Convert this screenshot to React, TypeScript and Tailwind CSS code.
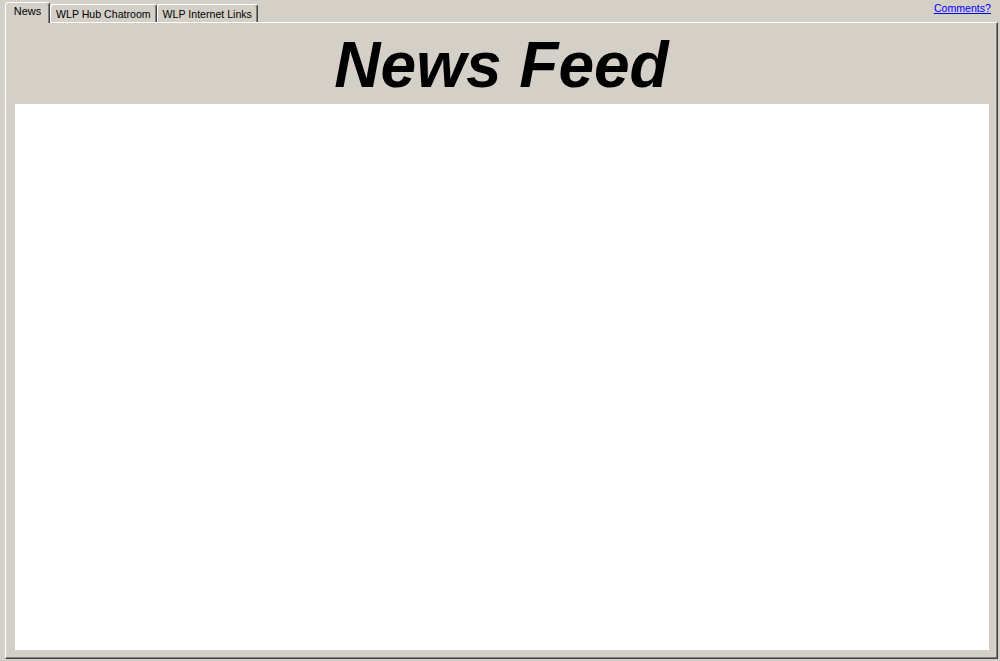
export default function App() {
  const tabs = ['News', 'WLP Hub Chatroom', 'WLP Internet Links'];
  const active = 0;

  return (
    <div className="w-[1000px] h-[661px] bg-[#d4d0c8] font-['Liberation_Sans',Arial,sans-serif] text-black overflow-hidden">
      {/* tab strip */}
      <div className="h-[22px] flex items-end justify-between pl-[5px] pr-[9px]">
        <div className="flex items-end">
          {tabs.map((t, i) =>
            i === active ? (
              <div
                key={t}
                className="relative z-10 -mb-px h-[21px] w-[45px] bg-[#d4d0c8] border-l border-t border-white border-r border-r-[#404040] shadow-[inset_-1px_0_0_#808080] rounded-tl-[3px] rounded-tr-[3px] flex justify-center pt-[2px] text-[11px] leading-[13px]"
              >
                {t}
              </div>
            ) : (
              <div
                key={t}
                className="h-[18px] px-[5px] bg-[#d4d0c8] border-l border-t border-white border-r border-r-[#404040] shadow-[inset_-1px_0_0_#808080] rounded-tl-[3px] rounded-tr-[3px] pt-[3px] text-[10.6px] leading-[13px] whitespace-nowrap"
              >
                {t}
              </div>
            )
          )}
        </div>
        <a href="#" className="self-start mt-[2px] text-[10.6px] leading-[13px] text-[#0000ff] underline">
          Comments?
        </a>
      </div>

      {/* tab panel */}
      <div className="ml-[5px] w-[993px] h-[637px] border-l border-t border-white border-r border-b border-r-[#404040] border-b-[#404040] shadow-[inset_-1px_-1px_0_#808080]">
        <div className="h-[81px] flex items-center justify-center">
          <h1 className="text-[64px] leading-none font-bold italic tracking-[0px] pt-[2px]">News Feed</h1>
        </div>
        <div className="ml-[9px] w-[974px] h-[546px] bg-white" />
      </div>
    </div>
  );
}
